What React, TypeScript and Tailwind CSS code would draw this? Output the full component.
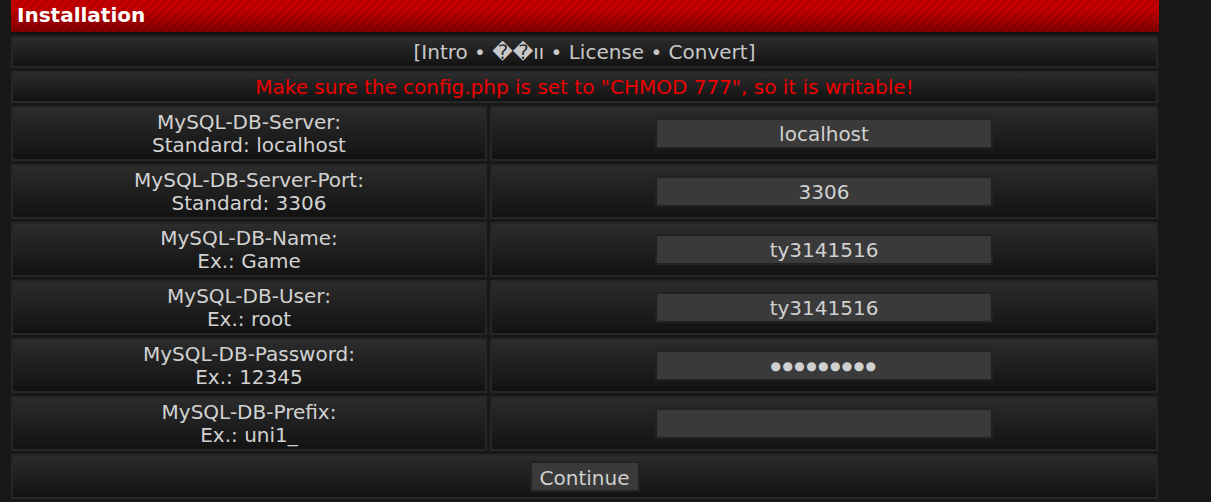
import React from 'react';

const cell =
    'border-2 border-[#262626] bg-[linear-gradient(to_bottom,#2c2c2c,#121212)]';

const fields = [
    { label: 'MySQL-DB-Server:', hint: 'Standard: localhost', value: 'localhost', masked: false },
    { label: 'MySQL-DB-Server-Port:', hint: 'Standard: 3306', value: '3306', masked: false },
    { label: 'MySQL-DB-Name:', hint: 'Ex.: Game', value: 'ty3141516', masked: false },
    { label: 'MySQL-DB-User:', hint: 'Ex.: root', value: 'ty3141516', masked: false },
    { label: 'MySQL-DB-Password:', hint: 'Ex.: 12345', value: '●●●●●●●●●', masked: true },
    { label: 'MySQL-DB-Prefix:', hint: 'Ex.: uni1_', value: '', masked: false },
];

export default function App() {
    return (
        <div className="min-h-screen bg-[#181818] font-['DejaVu_Sans',sans-serif]">
            <div className="ml-[11px] w-[1148px]">
                {/* Header */}
                <div className="h-[34px] border-b-[2px] border-[#111] bg-[linear-gradient(to_bottom,rgba(0,0,0,0)_30%,rgba(0,0,0,0.35)),repeating-linear-gradient(135deg,#b40000_0px,#b40000_3px,#c60000_3px,#c60000_6px)] px-[6px] pt-[3px]">
                    <h1 className="text-[20px] font-bold leading-[24px] text-white">Installation</h1>
                </div>

                <div className="mt-[2px] grid grid-cols-[476px_668px] gap-[3px]">
                    {/* Navigation */}
                    <div className={`${cell} col-span-2 h-[32px] text-center text-[20px] leading-[28px] text-[#c8c8c8]`}>
                        [Intro • ��וו • License • Convert]
                    </div>

                    {/* Notice */}
                    <div className={`${cell} col-span-2 h-[32px] text-center text-[20px] leading-[29px] text-[#ee0000]`}>
                        Make sure the config.php is set to "CHMOD 777", so it is writable!
                    </div>

                    {fields.map((f) => (
                        <React.Fragment key={f.label}>
                            <div className={`${cell} flex h-[55px] flex-col items-center justify-center text-[20px] leading-[23px] text-[#d2d2d2]`}>
                                <span>{f.label}</span>
                                <span>{f.hint}</span>
                            </div>
                            <div className={`${cell} flex h-[55px] items-center justify-center`}>
                                <input
                                    type="text"
                                    defaultValue={f.value}
                                    readOnly
                                    className={`h-[31px] w-[338px] border-2 border-[#222] bg-[#3a3a3a] text-center text-[#d0d0d0] outline-none ${
                                        f.masked ? 'text-[12px] tracking-[1.4px]' : 'text-[20px]'
                                    }`}
                                />
                            </div>
                        </React.Fragment>
                    ))}

                    {/* Submit */}
                    <div className={`${cell} col-span-2 flex h-[45px] items-center justify-center`}>
                        <button className="h-[31px] w-[110px] border-2 border-[#222] bg-[#3a3a3a] text-[20px] text-[#d0d0d0]">
                            Continue
                        </button>
                    </div>
                </div>
            </div>
        </div>
    );
}
